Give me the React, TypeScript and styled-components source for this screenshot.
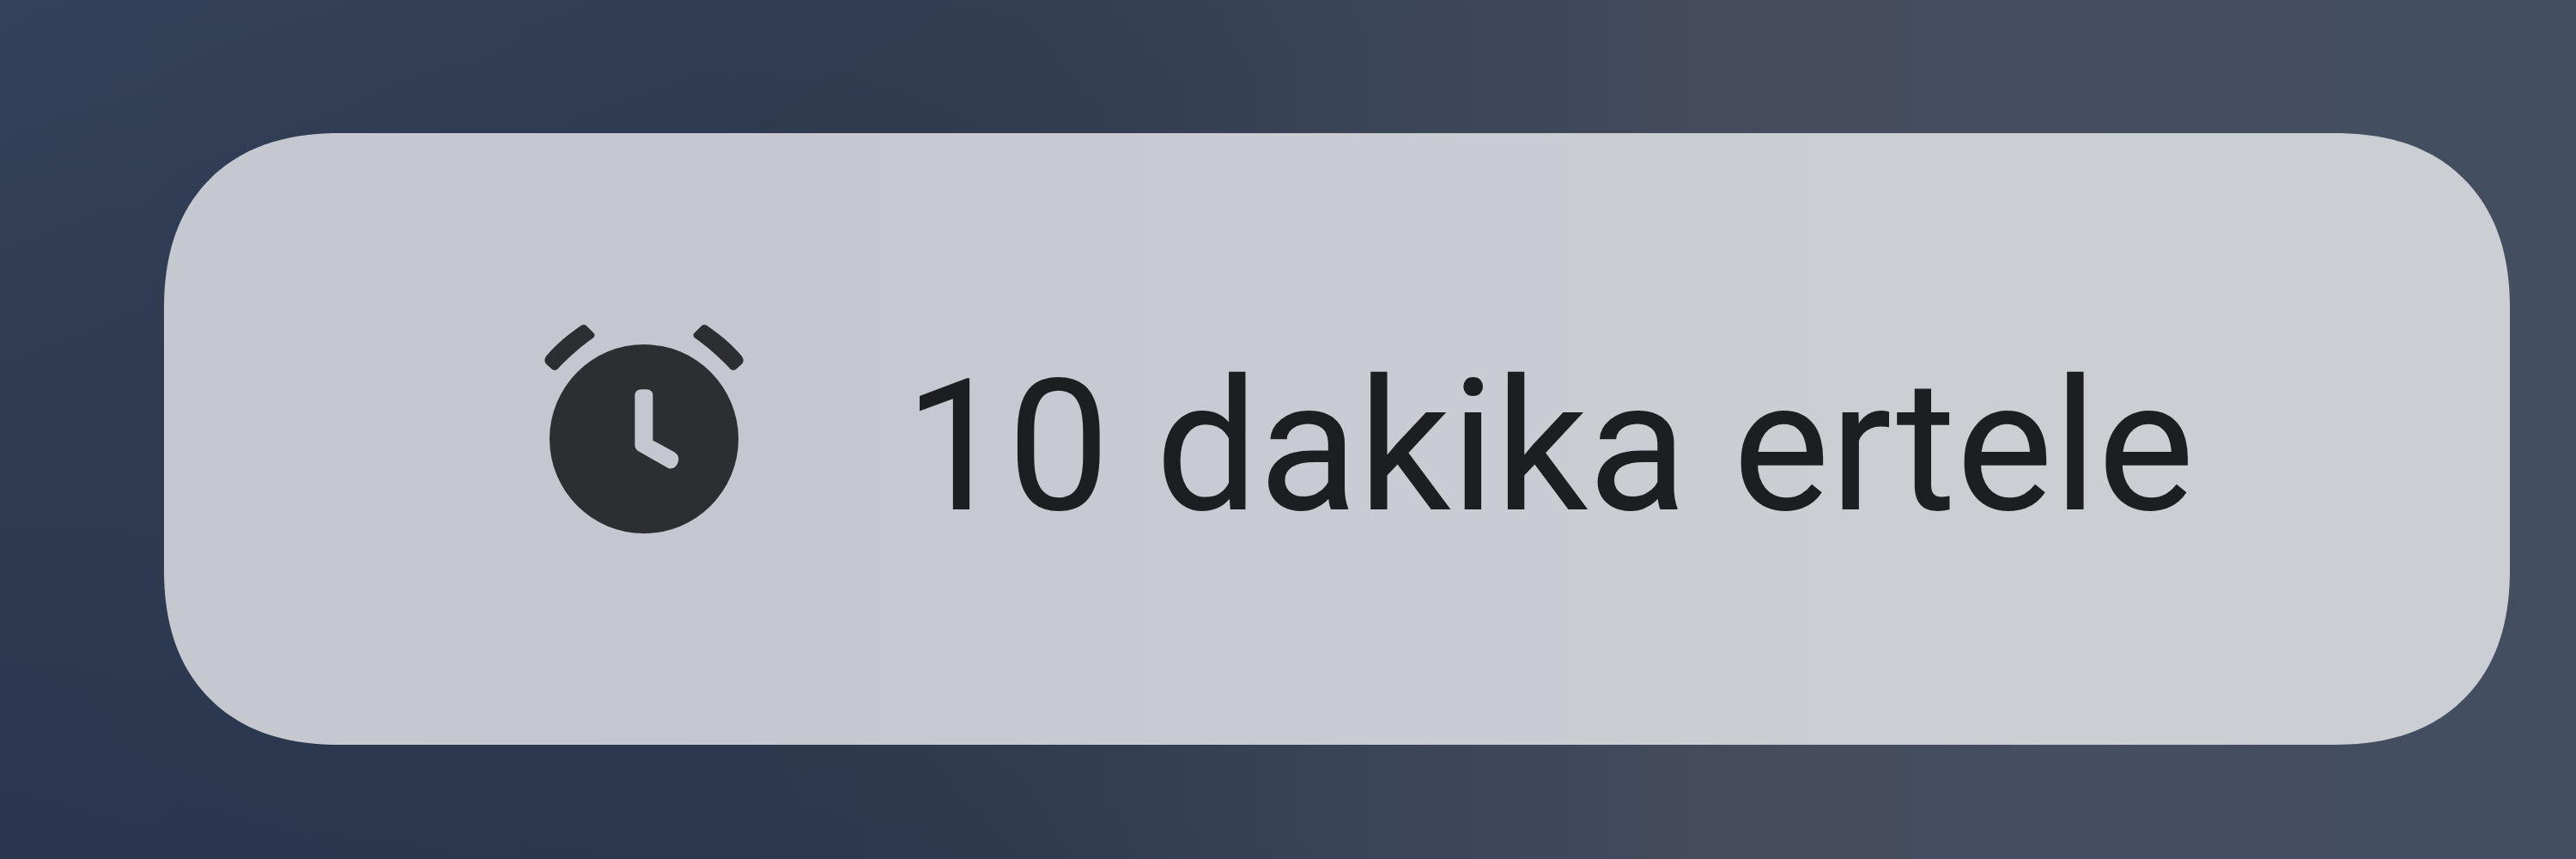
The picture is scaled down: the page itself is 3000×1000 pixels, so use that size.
import React from 'react';
import styled, { createGlobalStyle } from 'styled-components';

const GlobalStyle = createGlobalStyle`
  *, *::before, *::after { box-sizing: border-box; }
  body { margin: 0; background: #3a4557; }
`;

const Backdrop = styled.main`
  display: flex;
  min-height: 100vh;
  padding: 155px 77px 133px 191px;
  background:
    linear-gradient(165deg, rgba(70, 84, 116, 0.28) 0%, rgba(50, 65, 95, 0) 26%),
    linear-gradient(15deg, rgba(34, 44, 76, 0.36) 0%, rgba(36, 48, 74, 0) 24%),
    linear-gradient(90deg, #2e3b52 0%, #2c394d 27%, #303c4f 40%, #394456 52%, #434b5d 66%, #464e61 82%, #434e61 100%);
`;

const SnoozeButton = styled.button`
  display: flex;
  flex: 1;
  align-items: center;
  justify-content: center;
  gap: 187px;
  padding: 0 0 0 76px;
  border: 0;
  border-radius: 205px;
  corner-shape: superellipse(1.2);
  background: linear-gradient(90deg, #c5c8ce 0%, #c4c7cf 22%, #c8cbd1 45%, #cbced3 75%, #cbced3 100%);
  color: #1c1e22;
  font-family: Roboto, "Liberation Sans", sans-serif;
  font-size: 213px;
  line-height: 256px;
  white-space: nowrap;
  cursor: pointer;
`;

const Label = styled.span`
  padding-top: 18px;
`;

const ClockGlyph = styled.svg`
  flex: none;
  width: 232px;
  height: 268px;
  fill: #2d2e32;
`;

const bell =
  'M107 208 Q108 200 112 195 C150 150 190 118 235 87 Q245 82 252 88 L280 116 Q284 124 277 131 C235 160 195 195 152 240 Q143 247 134 242 L112 222 Q106 216 107 208 Z';

function AlarmIcon() {
  return (
    <ClockGlyph viewBox="106 82 696 804" aria-hidden="true">
      <path d={bell} />
      <path d={bell} transform="matrix(-1 0 0 1 908 0)" />
      <path
        fillRule="evenodd"
        d="M454 154 A330 330 0 1 1 454 814 A330 330 0 1 1 454 154 Z M422 334 Q422 311 445 311 H462 Q485 311 485 334 V489 L560 530 Q580 543 573 565 Q564 591 540 587 L432 525 Q422 517 422 505 Z"
      />
    </ClockGlyph>
  );
}

export default function App() {
  return (
    <>
      <GlobalStyle />
      <Backdrop>
        <SnoozeButton type="button">
          <AlarmIcon />
          <Label>10 dakika ertele</Label>
        </SnoozeButton>
      </Backdrop>
    </>
  );
}
